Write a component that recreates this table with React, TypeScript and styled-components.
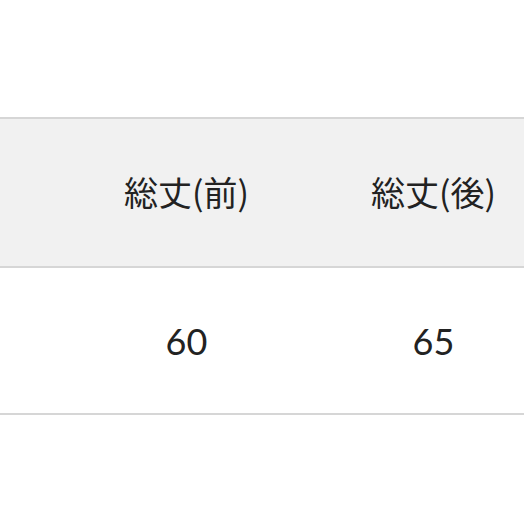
import React from "react";
import styled, { createGlobalStyle } from "styled-components";

const Global = createGlobalStyle`
  html, body { margin: 0; padding: 0; background: #ffffff; }
  body { font-family: "Noto Sans CJK JP", "Noto Sans", sans-serif; }
`;

const Page = styled.div`
  width: 524px;
  height: 524px;
  overflow: hidden;
  padding-top: 117px;
  box-sizing: border-box;
`;

const Table = styled.div`
  border-top: 2px solid #d6d6d6;
`;

const Row = styled.div<{ $head?: boolean; $h: number }>`
  display: grid;
  grid-template-columns: 63px 247px 247px;
  height: ${(p) => p.$h}px;
  background: ${(p) => (p.$head ? "#f1f1f1" : "#ffffff")};
  border-bottom: 2px solid #d6d6d6;
`;

const Cell = styled.div<{ $num?: boolean }>`
  display: flex;
  align-items: center;
  justify-content: center;
  color: #222222;
  white-space: nowrap;
  padding-bottom: ${(p) => (p.$num ? "0" : "3px")};
  font-family: ${(p) =>
    p.$num
      ? `"Lato", "Noto Sans", sans-serif`
      : `"Noto Sans CJK JP", "Noto Sans", sans-serif`};
  font-size: ${(p) => (p.$num ? "36px" : "34px")};
  font-weight: 400;
`;

export default function App() {
  return (
    <>
      <Global />
      <Page>
        <Table>
          <Row $head $h={147}>
            <Cell />
            <Cell>総丈(前)</Cell>
            <Cell>総丈(後)</Cell>
          </Row>
          <Row $h={145}>
            <Cell $num />
            <Cell $num>60</Cell>
            <Cell $num>65</Cell>
          </Row>
        </Table>
      </Page>
    </>
  );
}
